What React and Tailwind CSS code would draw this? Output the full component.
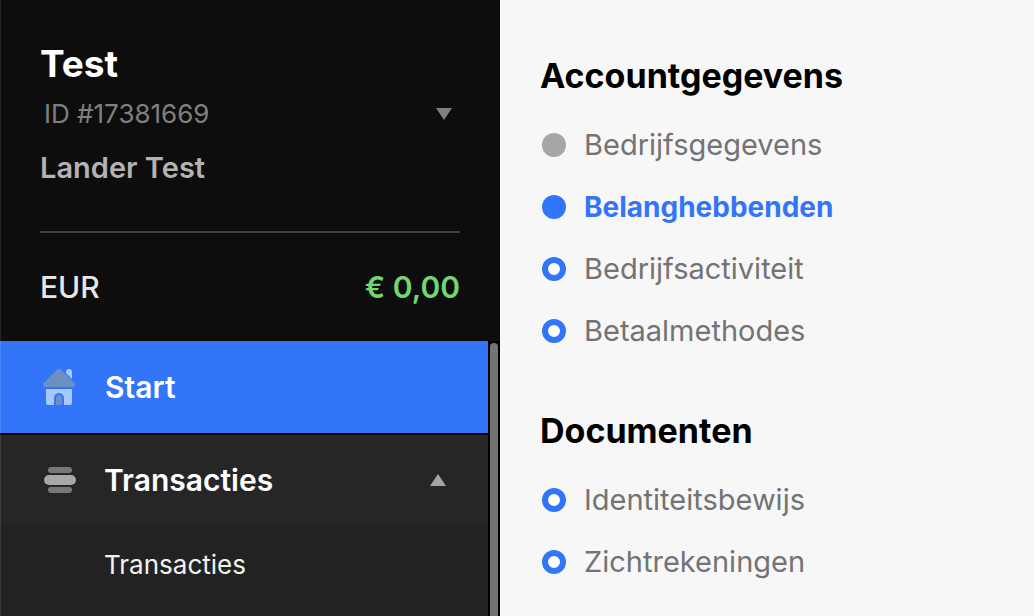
import React from "react";
import clsx from "clsx";

const sections = [
  {
    title: "Accountgegevens",
    steps: [
      { label: "Bedrijfsgegevens", status: "done" },
      { label: "Belanghebbenden", status: "active" },
      { label: "Bedrijfsactiviteit", status: "open" },
      { label: "Betaalmethodes", status: "open" },
    ],
  },
  {
    title: "Documenten",
    steps: [
      { label: "Identiteitsbewijs", status: "open" },
      { label: "Zichtrekeningen", status: "open" },
    ],
  },
];

const HomeIcon = () => (
  <svg className="w-8 h-9 shrink-0" viewBox="0 0 32 36" aria-hidden="true">
    <path fill="#a5c8ff" d="M23 3a3 3 0 0 1 6 0v7l-6-6z" />
    <path
      fill="#6c90c4"
      d="M13.6 1a3.4 3.4 0 0 1 4.8 0L31.3 14c1.4 1.5.3 4-1.7 4H2.4C.4 18-.7 15.5.7 14z"
    />
    <path
      fill="#a5c8ff"
      d="M3 20h26v14a2 2 0 0 1-2 2h-6v-7a5 5 0 0 0-10 0v7H5a2 2 0 0 1-2-2z"
    />
    <path fill="#6c90c4" d="M13 36v-7a3 3 0 0 1 6 0v7z" />
  </svg>
);

const TransactionsIcon = () => (
  <svg className="w-8 h-[26px] shrink-0" viewBox="0 0 32 26" aria-hidden="true">
    <rect x="4" y="0" width="24" height="6" rx="3" fill="#787878" />
    <rect x="0" y="8" width="32" height="10" rx="5" fill="#a8a8a8" />
    <rect x="4" y="20" width="24" height="6" rx="3" fill="#787878" />
  </svg>
);

const Triangle = ({ up = false, className = "" }) => (
  <svg
    className={clsx("w-4 h-3 shrink-0", className)}
    viewBox="0 0 16 12"
    fill="currentColor"
    aria-hidden="true"
  >
    <path d={up ? "M8 0l8 12H0z" : "M0 0h16L8 12z"} />
  </svg>
);

const Step = ({ label, status }) => (
  <li>
    <a
      href="#"
      className={clsx(
        "flex items-center gap-[18px] leading-8",
        status === "active"
          ? "text-[28px] font-bold text-[#3375f8]"
          : "text-[29px] text-[#737373]"
      )}
    >
      <span
        className={clsx(
          "size-6 shrink-0 rounded-full",
          status === "done" && "bg-[#a6a6a6]",
          status === "active" && "bg-[#3375f8]",
          status === "open" && "border-6 border-[#3375f8] bg-white"
        )}
      ></span>
      {label}
    </a>
  </li>
);

const Sidebar = () => (
  <aside className="relative w-[500px] shrink-0 flex flex-col bg-[#0d0d0d] text-white">
    <header className="px-10 pt-11 pb-9">
      <h1 className="text-[37px] leading-10 font-bold">Test</h1>
      <button
        type="button"
        className="w-full flex items-center justify-between pl-1 pr-2 mt-3 text-[26px] leading-9 text-[#808080]"
      >
        ID #17381669
        <Triangle />
      </button>
      <p className="mt-4 text-[29px] leading-10 font-semibold text-[#b3b3b3]">
        Lander Test
      </p>
      <div className="mt-[43px] pt-9 border-t-2 border-[#404040] flex justify-between text-[30px] leading-9">
        <span className="font-medium text-[#e6e6e6]">EUR</span>
        <span className="font-semibold text-[#72d86e]">€ 0,00</span>
      </div>
    </header>
    <div className="flex-1 flex bg-black">
      <nav className="flex-1 flex flex-col bg-[#222222]">
        <a
          href="#"
          className="h-[94px] flex items-center gap-[30px] pl-[43px] border-b-2 border-black bg-[#3375f8] text-[30px] font-semibold"
        >
          <HomeIcon />
          Start
        </a>
        <button
          type="button"
          className="h-[90px] flex items-center gap-7 pl-11 pr-[42px] bg-[#262626] text-[30px] font-semibold text-left"
        >
          <TransactionsIcon />
          <span className="flex-1">Transacties</span>
          <Triangle up className="text-[#a6a6a6]" />
        </button>
        <a
          href="#"
          className="pl-[104px] py-6 text-[26px] leading-8 text-[#f2f2f2]"
        >
          Transacties
        </a>
      </nav>
      <div className="w-3 px-[2px] pt-[2px] flex">
        <div className="flex-1 rounded-t-full bg-[#737373]"></div>
      </div>
    </div>
    <span className="absolute inset-y-0 left-0 w-px bg-white/10 pointer-events-none"></span>
  </aside>
);

export default function App() {
  return (
    <div className="min-h-screen flex bg-[#f7f7f7] font-['Inter',sans-serif]">
      <Sidebar />
      <main className="flex-1 px-10 pt-14 flex flex-col gap-16">
        {sections.map((section) => (
          <section key={section.title}>
            <h2 className="text-[34px] leading-10 font-bold text-black">
              {section.title}
            </h2>
            <ul className="mt-[33px] pl-[2px] flex flex-col gap-[30px]">
              {section.steps.map((step) => (
                <Step key={step.label} {...step} />
              ))}
            </ul>
          </section>
        ))}
      </main>
    </div>
  );
}
